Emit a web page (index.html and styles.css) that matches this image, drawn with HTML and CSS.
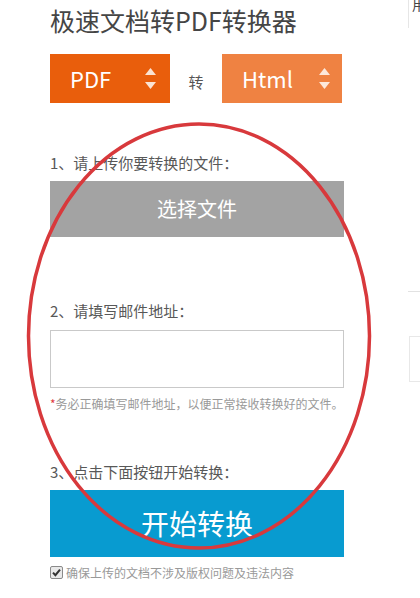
FILE: index.html
```html
<!DOCTYPE html>
<html lang="zh-CN">
<head>
<meta charset="utf-8">
<title>极速文档转PDF转换器</title>
<link rel="stylesheet" href="styles.css">
</head>
<body>
<div class="page">
  <main class="main">
    <h1 class="title">极速文档转PDF转换器</h1>
    <div class="convert">
      <div class="pick pick-from">
        <span class="pick-text">PDF</span>
        <svg class="pick-arrows" width="11" height="22" viewBox="0 0 11 22"><polygon points="5.5,0 11,7 0,7" fill="#fbe3d3"/><polygon points="0,14 11,14 5.5,21" fill="#fbe3d3"/></svg>
      </div>
      <span class="to">转</span>
      <div class="pick pick-to">
        <span class="pick-text">Html</span>
        <svg class="pick-arrows" width="11" height="22" viewBox="0 0 11 22"><polygon points="5.5,0 11,7 0,7" fill="#fde8da"/><polygon points="0,14 11,14 5.5,21" fill="#fde8da"/></svg>
      </div>
    </div>

    <p class="label label-1">1、请上传你要转换的文件：</p>
    <div class="btn btn-file">选择文件</div>

    <p class="label label-2">2、请填写邮件地址：</p>
    <div class="email"></div>
    <p class="note"><span class="star">*</span>务必正确填写邮件地址，以便正常接收转换好的文件。</p>

    <p class="label label-3">3、点击下面按钮开始转换：</p>
    <div class="btn btn-start">开始转换</div>

    <div class="agree">
      <span class="check"><svg width="11" height="11" viewBox="0 0 11 11"><path d="M2 5.6 L4.4 8.2 L9 2.6" fill="none" stroke="#333" stroke-width="2"/></svg></span>
      <span class="agree-text">确保上传的文档不涉及版权问题及违法内容</span>
    </div>
  </main>

  <aside class="side">
    <div class="side-head"><span class="side-glyph">用</span></div>
    <div class="side-rule"></div>
    <div class="side-box"></div>
  </aside>

  <svg class="circle" width="350" height="434" viewBox="0 0 350 434"><ellipse cx="175" cy="217" rx="170.5" ry="212" fill="none" stroke="#d8393c" stroke-width="3.5"/></svg>
</div>
</body>
</html>
```

FILE: styles.css
```css
html, body {
  margin: 0;
  padding: 0;
  background: #ffffff;
}

body {
  font-family: "Noto Sans CJK SC", "Noto Sans", sans-serif;
  color: #555;
}

.page {
  position: relative;
  display: flex;
  width: 420px;
  height: 598px;
  overflow: hidden;
}

.main {
  width: 294px;
  padding-left: 50px;
  flex: none;
}

.title {
  margin: 0;
  font-size: 25px;
  line-height: 40px;
  font-weight: 400;
  color: #454545;
  white-space: nowrap;
}

.convert {
  margin-top: 14px;
  display: flex;
  align-items: center;
  height: 49px;
}

.pick {
  width: 120px;
  height: 49px;
  display: flex;
  align-items: center;
  justify-content: space-between;
  box-sizing: border-box;
  padding: 0 13px 0 20px;
  color: #fff;
}

.pick-from {
  background: #e95e0c;
}

.pick-to {
  background: #ef8242;
}

.pick-text {
  font-size: 22px;
  line-height: 49px;
}

.pick-arrows {
  display: block;
}

.pick-from .pick-arrows {
  margin-right: 1px;
}

.pick-to .pick-arrows {
  margin-right: -1px;
}

.to {
  width: 52px;
  text-align: center;
  font-size: 15px;
  color: #555;
  padding-top: 5px;
}

.label {
  margin: 0;
  font-size: 15px;
  line-height: 20px;
  color: #585858;
  white-space: nowrap;
}

.label-1 { margin-top: 50px; }
.label-2 { margin-top: 64px; }
.label-3 { margin-top: 50px; }

.btn {
  color: #fff;
  text-align: center;
}

.btn-file {
  margin-top: 8px;
  height: 56px;
  line-height: 56px;
  background: #a3a3a3;
  font-size: 20px;
}

.btn-start {
  margin-top: 8px;
  height: 67px;
  line-height: 67px;
  background: #089bd0;
  font-size: 28px;
}

.email {
  margin-top: 9px;
  height: 58px;
  box-sizing: border-box;
  border: 1px solid #c9c9c9;
  background: #fff;
}

.note {
  margin: 8px 0 0;
  font-size: 12px;
  line-height: 16px;
  color: #999;
  white-space: nowrap;
}

.star {
  color: #e0393c;
}

.agree {
  margin-top: 6px;
  display: flex;
  align-items: center;
  height: 18px;
}

.check {
  width: 11px;
  height: 11px;
  border: 1px solid #8a8a8a;
  border-radius: 2px;
  background: #e9e9e9;
  display: flex;
  align-items: center;
  justify-content: center;
  flex: none;
}

.agree-text {
  margin-left: 3px;
  font-size: 12px;
  color: #999;
  white-space: nowrap;
}

.side {
  margin-left: 64px;
  width: 12px;
  flex: none;
}

.side-head {
  height: 28px;
  border-left: 1px solid #e6e6e6;
  overflow: hidden;
}

.side-glyph {
  display: block;
  margin: -4px 0 0 3px;
  font-size: 14px;
  line-height: 16px;
  color: #444;
  white-space: nowrap;
}

.side-rule {
  margin-top: 263px;
  height: 1px;
  background: #e2e2e2;
}

.side-box {
  margin-top: 44px;
  margin-left: 1px;
  height: 44px;
  border: 1px solid #e8e8e8;
  border-right: none;
}

.circle {
  position: absolute;
  left: 23.5px;
  top: 119px;
  pointer-events: none;
}
```
